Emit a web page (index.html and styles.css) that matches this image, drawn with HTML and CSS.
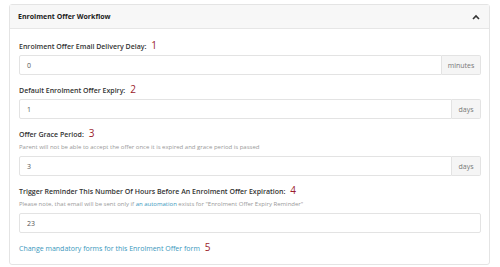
FILE: index.html
```html
<!DOCTYPE html>
<html lang="en">
<head>
  <meta charset="UTF-8" />
  <title>Enrolment Offer Workflow</title>
  <link rel="stylesheet" href="styles.css">
</head>
<body>
  <div class="card">
    <div class="card-header">
      <span class="card-title">Enrolment Offer Workflow</span>
      <svg class="chevron" width="8" height="6" viewBox="0 0 8 6">
        <polyline points="1,5 4,2 7,5" fill="none" stroke="#333" stroke-width="1.6" />
      </svg>
    </div>
    <div class="card-body">
      <div class="form-group">
        <label>Enrolment Offer Email Delivery Delay: <span class="step">1</span></label>
        <div class="input-group">
          <div class="input">0</div>
          <div class="addon addon-wide">minutes</div>
        </div>
      </div>

      <div class="form-group">
        <label>Default Enrolment Offer Expiry: <span class="step">2</span></label>
        <div class="input-group">
          <div class="input">1</div>
          <div class="addon">days</div>
        </div>
      </div>

      <div class="form-group">
        <label>Offer Grace Period: <span class="step">3</span></label>
        <p class="help">Parent will not be able to accept the offer once it is expired and grace period is passed</p>
        <div class="input-group">
          <div class="input">3</div>
          <div class="addon">days</div>
        </div>
      </div>

      <div class="form-group">
        <label>Trigger Reminder This Number Of Hours Before An Enrolment Offer Expiration: <span class="step">4</span></label>
        <p class="help">Please note, that email will be sent only if <a href="#">an automation</a> exists for "Enrolment Offer Expiry Reminder"</p>
        <div class="input-group">
          <div class="input">23</div>
        </div>
      </div>

      <div class="form-link">
        <a href="#">Change mandatory forms for this Enrolment Offer form</a> <span class="step">5</span>
      </div>
    </div>
  </div>
</body>
</html>
```

FILE: styles.css
```css
* { box-sizing: border-box; margin: 0; padding: 0; }
body {
  font-family: 'Open Sans', sans-serif;
  background: #fff;
  color: #333;
}
.card {
  margin: 4px 10px 0 9px;
  border: 1px solid #e4e4e4;
  border-radius: 3px;
}
.card-header {
  height: 24px;
  display: flex;
  align-items: center;
  justify-content: space-between;
  padding: 0 9px 0 8px;
  background: #f7f7f7;
  border-bottom: 1px solid #e6e6e6;
}
.card-title { font-size: 7px; font-weight: 700; color: #222; }
.chevron { display: block; }

.card-body { padding: 12px 8px 9px 9px; }
.form-group { margin-bottom: 10px; }
label {
  display: block;
  font-size: 7px;
  font-weight: 600;
  line-height: 12px;
  margin-bottom: 2px;
  color: #333;
}
.step {
  font-size: 10px;
  font-weight: 400;
  line-height: 0;
  color: #9b1c2c;
  margin-left: 3px;
}
.help {
  font-size: 6px;
  line-height: 9px;
  color: #999;
  margin: 2px 0 4px;
}
.help a, .form-link a { color: #3b98bd; text-decoration: none; }

.input-group { display: flex; height: 20px; }
.input {
  flex: 1;
  border: 1px solid #e3e3e3;
  border-radius: 2px;
  font-size: 7px;
  color: #555;
  padding-left: 7px;
  display: flex;
  align-items: center;
}
.input:not(:last-child) { border-radius: 2px 0 0 2px; }
.addon {
  width: 29px;
  background: #f5f5f5;
  border: 1px solid #e3e3e3;
  border-left: none;
  border-radius: 0 2px 2px 0;
  font-size: 7px;
  color: #777;
  display: flex;
  align-items: center;
  justify-content: center;
}
.addon-wide { width: 39px; }

.form-link {
  margin-top: 8px;
  font-size: 7px;
  line-height: 12px;
}
```
